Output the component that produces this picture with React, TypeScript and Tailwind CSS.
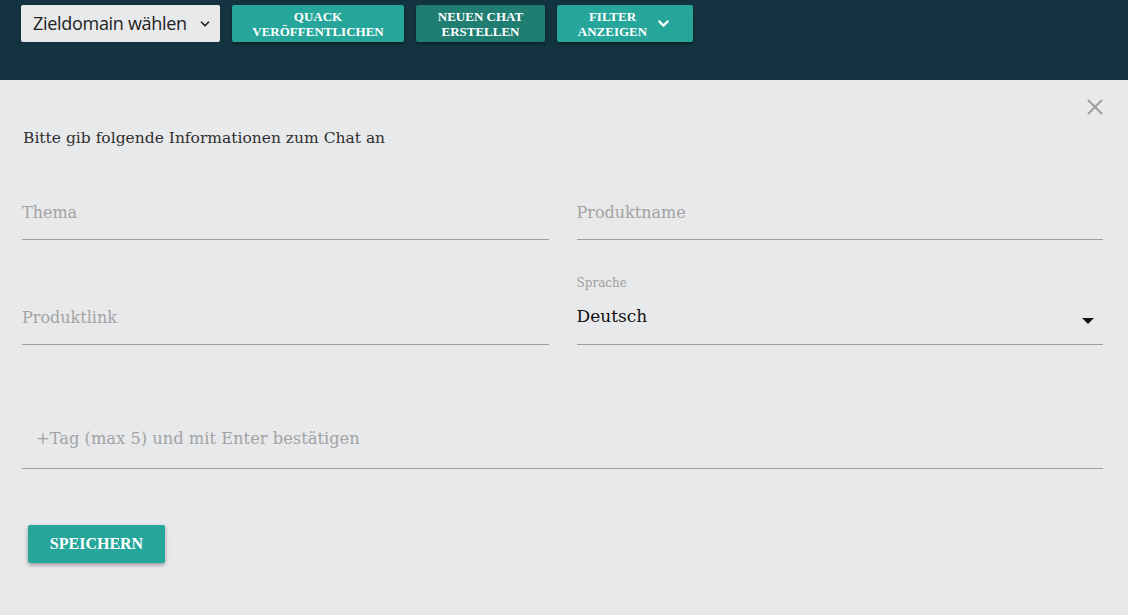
import { ChevronDown, X } from 'lucide-react';

const serif = { fontFamily: '"DejaVu Serif", "Liberation Serif", serif' };
const btnFont = { fontFamily: '"Liberation Serif", "DejaVu Serif", serif' };

function NavButton({ children, dark }: { children: React.ReactNode; dark?: boolean }) {
  return (
    <button
      className={`flex h-[37px] w-full items-center justify-center rounded-[2px] px-1 text-[13px] font-bold leading-[15px] text-white uppercase shadow-[0_2px_3px_rgba(0,0,0,0.35)] ${dark ? 'bg-[#1f7d72]' : 'bg-[#26a69a]'}`}
      style={btnFont}
    >
      {children}
    </button>
  );
}

function Field({ label, className }: { label: string; className?: string }) {
  return (
    <div className={`flex h-[58px] flex-col justify-end border-b border-[#9e9e9e] ${className ?? ''}`}>
      <span className="pb-[14px] text-[16px] text-[#a3a3a3]">{label}</span>
    </div>
  );
}

export default function App() {
  return (
    <div className="min-h-[615px] bg-[#e8e9eb]" style={serif}>
      <header className="h-[80px] bg-[#12333f] px-[21px] pt-[5px]">
        <div className="flex items-start">
          <div
            className="flex h-[37px] w-[199px] items-center justify-between rounded-[2px] bg-[#e8e9eb] pl-3 pr-[8px] text-[18px] text-[#222]"
            style={{ fontFamily: '"Open Sans", "Noto Sans", sans-serif' }}
          >
            <span className="tracking-[-0.3px]">Zieldomain wählen</span>
            <ChevronDown size={14} strokeWidth={3} />
          </div>
          <div className="ml-3 flex gap-3">
            <div className="w-[172px]">
              <NavButton>
                <span className="text-center">Quack<br />Veröffentlichen</span>
              </NavButton>
            </div>
            <div className="w-[129px]">
              <NavButton dark>
                <span className="text-center">Neuen Chat<br />Erstellen</span>
              </NavButton>
            </div>
            <div className="w-[136px]">
              <NavButton>
                <span className="text-center">Filter<br />Anzeigen</span>
                <ChevronDown size={17} strokeWidth={3} className="ml-2" />
              </NavButton>
            </div>
          </div>
        </div>
      </header>

      <main className="relative pl-[22px] pr-[25px] pt-[47px]">
        <button className="absolute right-[20px] top-[14px] text-[#9e9e9e]">
          <X size={26} strokeWidth={1.75} />
        </button>
        <p className="ml-[1px] text-[15.5px] text-[#2f2f2f]">Bitte gib folgende Informationen zum Chat an</p>

        <div className="mt-[32px] grid grid-cols-2 gap-x-[28px]">
          <Field label="Thema" />
          <Field label="Produktname" />
          <Field label="Produktlink" className="mt-[47px]" />
          <div className="mt-[47px] flex h-[58px] flex-col justify-end border-b border-[#9e9e9e]">
            <span className="mb-[12px] text-[12px] text-[#9e9e9e]">Sprache</span>
            <div className="flex items-center justify-between pb-[15px] pr-[8px]">
              <span className="text-[17px] text-[#111]">Deutsch</span>
              <svg width="14" height="8" viewBox="0 0 14 8" className="mt-[8px]">
                <path d="M1 1 L7 7 L13 1 Z" fill="#111" />
              </svg>
            </div>
          </div>
        </div>

        <div className="mt-[62px] flex h-[62px] items-end border-b border-[#9e9e9e] pl-[14px]">
          <span className="pb-[17px] text-[16.3px] text-[#a3a3a3]">+Tag (max 5) und mit Enter bestätigen</span>
        </div>

        <button
          className="ml-[6px] mt-[56px] h-[38px] w-[137px] rounded-[2px] bg-[#26a69a] text-[16px] font-bold text-white uppercase shadow-[0_2px_4px_rgba(0,0,0,0.35)]"
          style={btnFont}
        >
          Speichern
        </button>
      </main>
    </div>
  );
}
